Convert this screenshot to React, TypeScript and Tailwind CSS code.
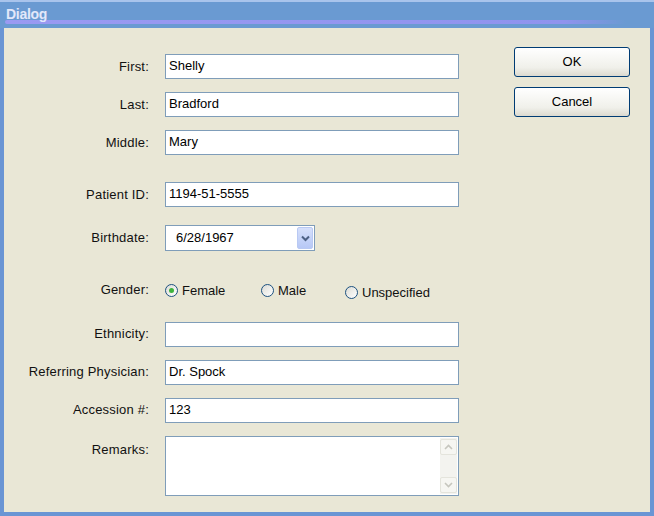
import React from "react";

const font = { fontFamily: '"Liberation Sans", Arial, sans-serif' };

function Field({ label, value, top }: { label: string; value?: string; top: string }) {
  return (
    <div className={`flex items-center ${top}`}>
      <div className="w-[145px] text-right text-[13px] tracking-[0.2px] text-[#111]">{label}</div>
      <div className="ml-[16px] h-[25px] w-[294px] border border-[#7f9db9] bg-white px-[3px] text-[13px] leading-[22px] text-black">
        {value}
      </div>
    </div>
  );
}

function Radio({ label, checked, className }: { label: string; checked?: boolean; className?: string }) {
  return (
    <div className={`flex items-center gap-[4px] ${className ?? ""}`}>
      <div className="flex h-[13px] w-[13px] items-center justify-center rounded-full border border-[#1c5180] bg-[linear-gradient(135deg,#dcdcd5,#ffffff)]">
        {checked && <div className="h-[5px] w-[5px] rounded-full bg-[#3cb33c]" />}
      </div>
      <span className="text-[13px] text-[#111]">{label}</span>
    </div>
  );
}

function Button({ label, top }: { label: string; top: string }) {
  return (
    <div
      className={`flex h-[30px] w-[116px] items-center justify-center rounded-[3px] border border-[#003c74] bg-[linear-gradient(180deg,#ffffff,#f0f0ea_70%,#dcdad0)] text-[13px] text-black ${top}`}
    >
      {label}
    </div>
  );
}

export default function App() {
  return (
    <div className="flex h-[516px] w-[654px] flex-col bg-[#6a9ad2]" style={font}>
      {/* title bar */}
      <div className="flex h-[28px] flex-col border-t-2 border-[#a9c4ec]">
        <div className="relative z-10 h-[18px] pl-[6px] pt-[5px] text-[14px] font-bold leading-[15px] tracking-[-0.3px] text-[#e2e8fa]">Dialog</div>
        <div className="mx-[5px] mr-[28px] h-[4px] rounded-full bg-[linear-gradient(90deg,#9a9af2,#8f93ee_90%,#6a9ad2)]" />
      </div>

      {/* body */}
      <div className="flex flex-1 border-x-4 border-b-4 border-[#6a95d4] bg-[#e9e7d6]">
        <div className="flex w-[460px] flex-col">
          <Field label="First:" value="Shelly" top="mt-[26px]" />
          <Field label="Last:" value="Bradford" top="mt-[13px]" />
          <Field label="Middle:" value="Mary" top="mt-[13px]" />
          <Field label="Patient ID:" value="1194-51-5555" top="mt-[27px]" />

          <div className="mt-[18px] flex items-center">
            <div className="w-[145px] text-right text-[13px] tracking-[0.2px] text-[#111]">Birthdate:</div>
            <div className="ml-[16px] flex h-[26px] w-[150px] items-center border border-[#7f9db9] bg-white pl-[10px] pr-[1px]">
              <span className="flex-1 text-[13px] text-black">6/28/1967</span>
              <div className="flex h-[22px] w-[16px] items-center justify-center rounded-[2px] border border-[#b9c9f3] bg-[linear-gradient(180deg,#d6e0fb,#b7c8f6)]">
                <svg width="9" height="7" viewBox="0 0 9 7">
                  <path d="M1 1.5 L4.5 5 L8 1.5" stroke="#4d6185" strokeWidth="2" fill="none" />
                </svg>
              </div>
            </div>
          </div>

          <div className="mt-[30px] flex items-start">
            <div className="w-[145px] text-right text-[13px] leading-[17px] tracking-[0.2px] text-[#111]">Gender:</div>
            <Radio label="Female" checked className="ml-[16px] w-[96px]" />
            <Radio label="Male" className="w-[84px]" />
            <Radio label="Unspecified" className="mt-[2px]" />
          </div>

          <Field label="Ethnicity:" top="mt-[19px]" />
          <Field label="Referring Physician:" value="Dr. Spock" top="mt-[13px]" />
          <Field label="Accession #:" value="123" top="mt-[13px]" />

          <div className="mt-[13px] flex items-start">
            <div className="w-[145px] pt-[4px] text-right text-[13px] tracking-[0.2px] text-[#111]">Remarks:</div>
            <div className="ml-[16px] flex h-[60px] w-[294px] border border-[#7f9db9] bg-white p-[1px]">
              <div className="flex-1" />
              <div className="flex w-[17px] flex-col justify-between bg-[#f3f3ef] py-[1px]">
                <div className="flex h-[16px] items-center justify-center rounded-[2px] border border-[#e4e4dc] bg-[#f6f6f2]">
                  <svg width="9" height="6" viewBox="0 0 9 6">
                    <path d="M1 5 L4.5 1.5 L8 5" stroke="#c6c6be" strokeWidth="1.6" fill="none" />
                  </svg>
                </div>
                <div className="flex h-[16px] items-center justify-center rounded-[2px] border border-[#e4e4dc] bg-[#f6f6f2]">
                  <svg width="9" height="6" viewBox="0 0 9 6">
                    <path d="M1 1 L4.5 4.5 L8 1" stroke="#c6c6be" strokeWidth="1.6" fill="none" />
                  </svg>
                </div>
              </div>
            </div>
          </div>
        </div>

        <div className="ml-[50px] flex flex-col">
          <Button label="OK" top="mt-[19px]" />
          <Button label="Cancel" top="mt-[10px]" />
        </div>
      </div>
    </div>
  );
}
